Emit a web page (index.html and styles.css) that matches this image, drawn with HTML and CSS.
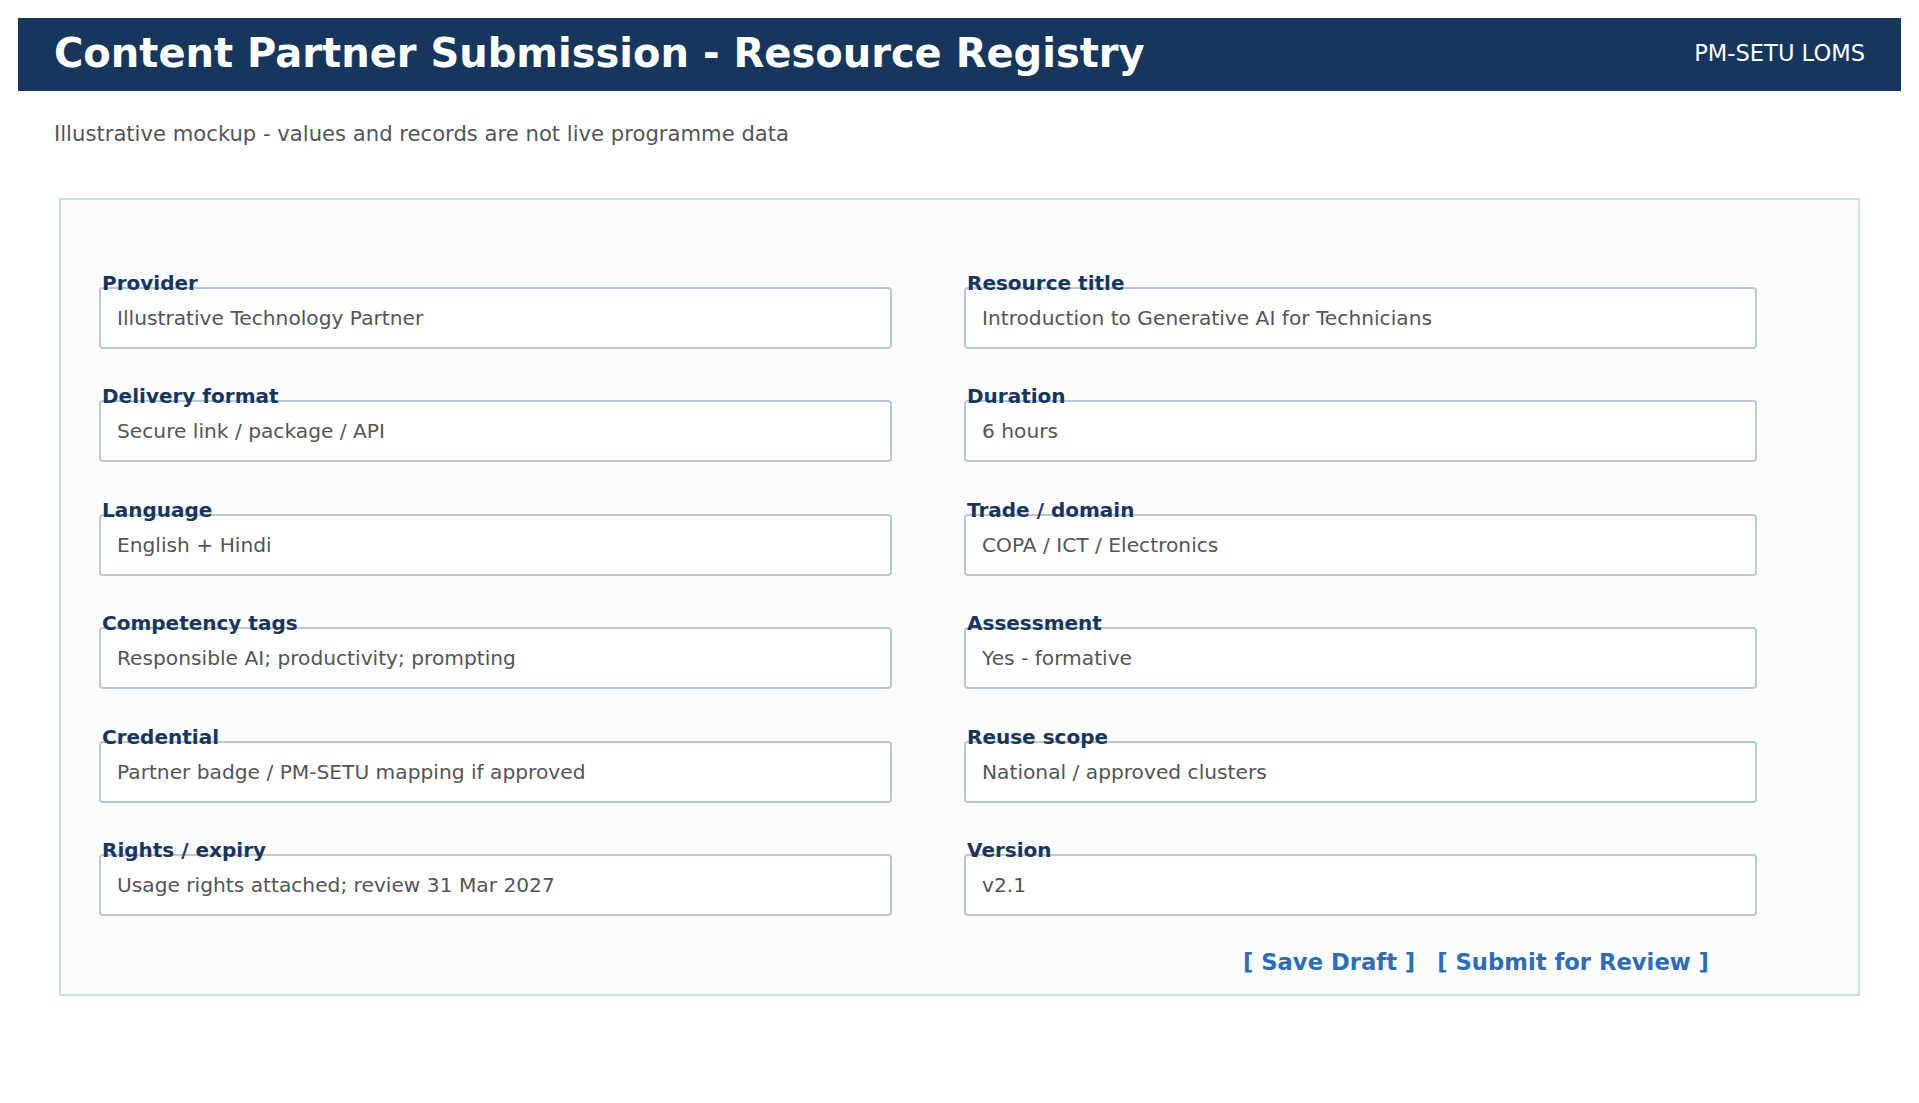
FILE: index.html
```html
<!DOCTYPE html>
<html lang="en">
<head>
<meta charset="utf-8">
<title>Content Partner Submission - Resource Registry</title>
<link rel="stylesheet" href="styles.css">
</head>
<body>
<header class="topbar">
  <h1 class="title">Content Partner Submission - Resource Registry</h1>
  <div class="brand">PM-SETU LOMS</div>
</header>
<p class="note">Illustrative mockup - values and records are not live programme data</p>
<section class="panel">
  <div class="grid">
    <div class="field"><label class="label">Provider</label><div class="input">Illustrative Technology Partner</div></div>
    <div class="field"><label class="label">Resource title</label><div class="input">Introduction to Generative AI for Technicians</div></div>
    <div class="field"><label class="label">Delivery format</label><div class="input">Secure link / package / API</div></div>
    <div class="field"><label class="label">Duration</label><div class="input">6 hours</div></div>
    <div class="field"><label class="label">Language</label><div class="input">English + Hindi</div></div>
    <div class="field"><label class="label">Trade / domain</label><div class="input">COPA / ICT / Electronics</div></div>
    <div class="field"><label class="label">Competency tags</label><div class="input">Responsible AI; productivity; prompting</div></div>
    <div class="field"><label class="label">Assessment</label><div class="input">Yes - formative</div></div>
    <div class="field"><label class="label">Credential</label><div class="input">Partner badge / PM-SETU mapping if approved</div></div>
    <div class="field"><label class="label">Reuse scope</label><div class="input">National / approved clusters</div></div>
    <div class="field"><label class="label">Rights / expiry</label><div class="input">Usage rights attached; review 31 Mar 2027</div></div>
    <div class="field"><label class="label">Version</label><div class="input">v2.1</div></div>
  </div>
  <div class="actions">
    <span class="action">[ Save Draft ]</span>
    <span class="action">[ Submit for Review ]</span>
  </div>
</section>
</body>
</html>
```
FILE: styles.css
```css
html, body {
  margin: 0;
  background: #ffffff;
}
body {
  padding: 18px;
  font-family: "DejaVu Sans", Verdana, sans-serif;
}
.topbar {
  box-sizing: border-box;
  height: 73px;
  background: #17365d;
  display: flex;
  align-items: center;
  justify-content: space-between;
  padding: 0 36px 3px;
  color: #ffffff;
}
.title {
  margin: 0;
  font-size: 40px;
  font-weight: bold;
  line-height: normal;
}
.brand {
  font-size: 22.6px;
}
.note {
  margin: 29.5px 0 0;
  padding-left: 36px;
  font-size: 21.15px;
  line-height: normal;
  color: #555555;
}
.panel {
  margin: 52.5px 41px 0 41px;
  border: 2px solid #d0dce8;
  background: #f9fbfd;
  padding: 70.5px 38px 19px;
}
.grid {
  display: grid;
  grid-template-columns: 793px 793px;
  column-gap: 72px;
  row-gap: 35.6px;
}
.field {
  display: flex;
  flex-direction: column;
}
.label {
  position: relative;
  z-index: 1;
  display: block;
  padding-left: 3px;
  font-size: 20px;
  line-height: 24px;
  font-weight: bold;
  color: #17365d;
}
.input {
  box-sizing: border-box;
  height: 62px;
  margin-top: -8px;
  border: 2px solid #b9c9d9;
  border-radius: 4px;
  background: #ffffff;
  padding: 0 16px;
  display: flex;
  align-items: center;
  font-size: 20.2px;
  color: #555555;
}
.actions {
  width: 1658px;
  display: flex;
  justify-content: flex-end;
  gap: 22px;
  margin-top: 33px;
  padding-right: 48px;
  box-sizing: border-box;
}
.action {
  font-size: 22.7px;
  line-height: 26px;
  font-weight: bold;
  color: #2e6db4;
}
```
